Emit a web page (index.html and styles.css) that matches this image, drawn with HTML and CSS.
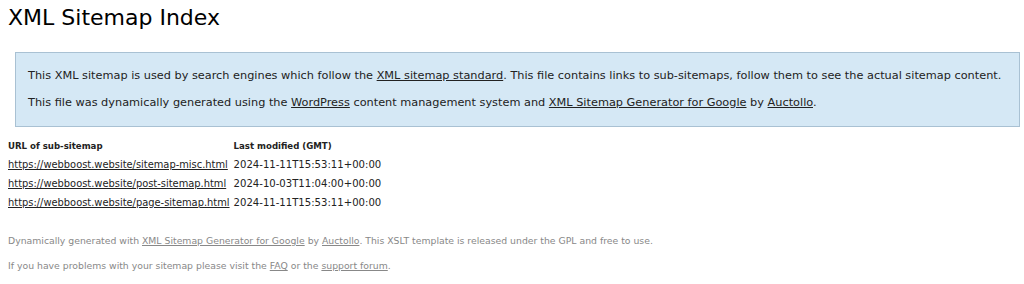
FILE: index.html
```html
<!DOCTYPE html>
<html>
<head>
<meta charset="utf-8">
<link rel="stylesheet" href="styles.css">
</head>
<body>
<h1 class="title">XML Sitemap Index</h1>
<div class="intro">
  <p>This XML sitemap is used by search engines which follow the <a href="#">XML sitemap standard</a>. This file contains links to sub-sitemaps, follow them to see the actual sitemap content.</p>
  <p>This file was dynamically generated using the <a href="#">WordPress</a> content management system and <a href="#">XML Sitemap Generator for Google</a> by <a href="#">Auctollo</a>.</p>
</div>
<table class="sitemaps">
  <thead>
    <tr><th>URL of sub-sitemap</th><th>Last modified (GMT)</th></tr>
  </thead>
  <tbody>
    <tr><td class="loc"><a href="#">https://webboost.website/sitemap-misc.html</a></td><td class="date">2024-11-11T15:53:11+00:00</td></tr>
    <tr><td class="loc"><a href="#">https://webboost.website/post-sitemap.html</a></td><td class="date">2024-10-03T11:04:00+00:00</td></tr>
    <tr><td class="loc"><a href="#">https://webboost.website/page-sitemap.html</a></td><td class="date">2024-11-11T15:53:11+00:00</td></tr>
  </tbody>
</table>
<div class="footer">
  <p>Dynamically generated with <a href="#">XML Sitemap Generator for Google</a> by <a href="#">Auctollo</a>. This XSLT template is released under the GPL and free to use.</p>
  <p>If you have problems with your sitemap please visit the <a href="#">FAQ</a> or the <a href="#">support forum</a>.</p>
</div>
</body>
</html>
```
FILE: styles.css
```css
body {
  margin: 0;
  padding: 0 8px;
  font-family: "DejaVu Sans", Verdana, sans-serif;
  color: #111;
  background: #fff;
}
a { color: #222; }
.title {
  font-size: 22px;
  font-weight: normal;
  margin: 0;
  padding-top: 5px;
  height: 52px;
  box-sizing: border-box;
  line-height: 26px;
  color: #000;
}
.intro {
  margin: 0 -4px 0 7px;
  background: #d5e8f5;
  border: 1px solid #a9c1d3;
  padding: 9px 12px 10px;
  font-size: 11.3px;
  color: #222;
  white-space: nowrap;
}
.intro p { margin: 0; line-height: 27px; }
.sitemaps {
  border-collapse: collapse;
  margin-top: 10px;
  color: #222;
}
.sitemaps th {
  text-align: left;
  font-weight: bold;
  font-size: 8.6px;
  padding: 0 4px 0 0;
  height: 18px;
}
.sitemaps td {
  padding: 0 4px 0 0;
  height: 19px;
}
.sitemaps .loc { font-size: 9.9px; }
.sitemaps .date { font-size: 10.1px; }
.footer {
  margin-top: 16px;
  font-size: 9.3px;
  color: #888;
  white-space: nowrap;
}
.footer a { color: #888; }
.footer p { margin: 0; line-height: 25px; }
```
